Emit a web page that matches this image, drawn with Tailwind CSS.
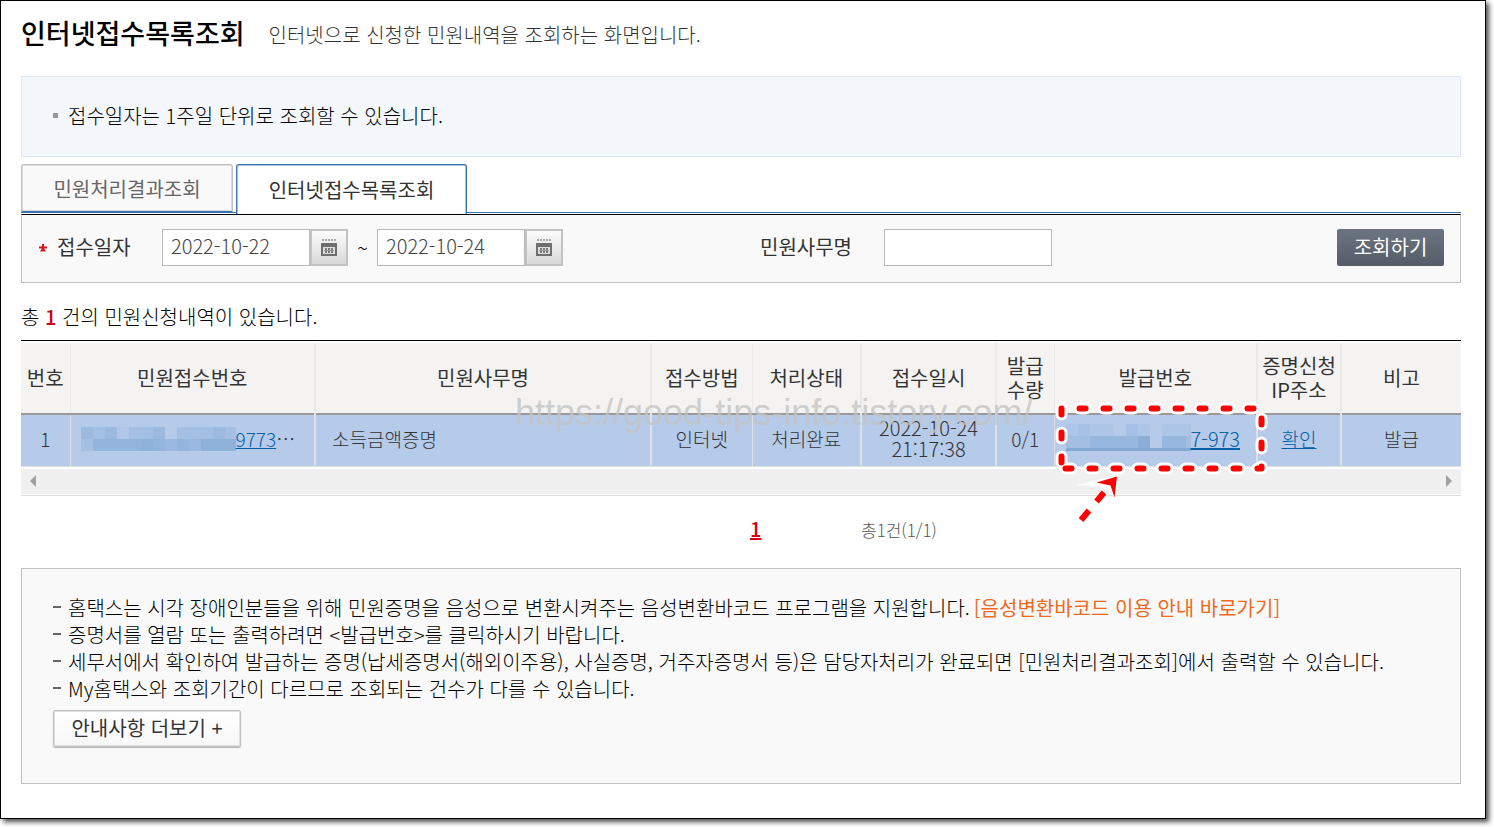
<!DOCTYPE html>
<html lang="ko">
<head>
<meta charset="utf-8">
<title>인터넷접수목록조회</title>
<script src="https://cdn.jsdelivr.net/npm/@tailwindcss/browser@4"></script>
</head>
<body class="bg-white pr-2 pb-2 font-['Noto_Sans_CJK_KR',sans-serif] font-light text-black">
<div class="relative border border-black bg-white pl-5 pr-6 pb-[34px] shadow-[3px_3px_5px_rgba(0,0,0,0.7)]">
  <header class="flex h-[75px] items-center gap-6 pb-3">
    <h1 class="text-[27px] leading-8 font-medium">인터넷접수목록조회</h1>
    <p class="pt-1 text-[20px] leading-6 text-[#333]">인터넷으로 신청한 민원내역을 조회하는 화면입니다.</p>
  </header>

  <ul class="border border-[#dfe7f0] bg-[#f4f7fc] pt-[25px] pb-[27px] pl-[31px]">
    <li class="flex items-center gap-[10px] text-[20px] leading-[27px]"><span class="size-[5px] bg-[#999]"></span>접수일자는 1주일 단위로 조회할 수 있습니다.</li>
  </ul>

  <nav class="relative mt-[7px] flex h-[50px] gap-[3px] text-[20px] font-normal">
    <span class="absolute inset-x-0 bottom-px h-px bg-[#3a72b0]"></span>
    <button type="button" class="h-[49px] w-[212px] rounded-t-[3px] border border-b-2 border-[#c0c0c0] border-b-[#3a72b0] bg-[#f9f9f9] pt-[2px] text-[#666] shadow-[inset_0_0_0_1px_#dcdcdc]">민원처리결과조회</button>
    <button type="button" class="relative w-[231px] rounded-t-[3px] border border-b-0 border-[#3a72b0] bg-white text-[#333] shadow-[inset_1px_1px_0_#a9c4e0,inset_-1px_0_0_#a9c4e0]">인터넷접수목록조회</button>
  </nav>

  <form class="flex h-[69px] items-center border border-[#c0c0c0] border-t-black bg-[#f9f9f9] px-4 pb-[2px] text-[20px]">
    <div class="flex w-[722px] items-center">
      <svg class="mr-[9px] size-[10px]" viewBox="0 0 10 10" aria-hidden="true"><path d="M5 1v7M1 4.500h8" stroke="#d4161c" stroke-width="2" fill="none"/><path d="M5 4l3 4.500H2z" fill="#d4161c"/></svg>
      <label for="from" class="w-[105px] pb-[2px] font-normal text-[#333]">접수일자</label>
      <input id="from" value="2022-10-22" class="h-[37px] w-[148px] border border-[#b9b9b9] bg-white px-2 pb-1 text-[20px] text-[#444]">
      <button type="button" aria-label="시작일 선택" class="grid h-[37px] w-[38px] place-items-center border-2 border-[#c2c2c2] bg-linear-to-b from-[#fdfdfd] to-[#d8d8d8]">
        <svg class="size-[18px]" viewBox="0 0 18 18" shape-rendering="crispEdges" aria-hidden="true"><path d="M2 1h14" stroke="#aaa" stroke-width="2" stroke-dasharray="2 1"/><path d="M1 4h16v13H1z" fill="#6e6e6e"/><path d="M3 8h12v7H3z" fill="#dedede"/><path d="M5 10h8M5 13h8" stroke="#777" stroke-width="2" stroke-dasharray="2 1"/><path d="M4 11.500h10" stroke="#999"/></svg>
      </button>
      <span class="w-[29px] text-center">~</span>
      <input aria-label="종료일" value="2022-10-24" class="h-[37px] w-[148px] border border-[#b9b9b9] bg-white px-2 pb-1 text-[20px] text-[#444]">
      <button type="button" aria-label="종료일 선택" class="grid h-[37px] w-[38px] place-items-center border-2 border-[#c2c2c2] bg-linear-to-b from-[#fdfdfd] to-[#d8d8d8]">
        <svg class="size-[18px]" viewBox="0 0 18 18" shape-rendering="crispEdges" aria-hidden="true"><path d="M2 1h14" stroke="#aaa" stroke-width="2" stroke-dasharray="2 1"/><path d="M1 4h16v13H1z" fill="#6e6e6e"/><path d="M3 8h12v7H3z" fill="#dedede"/><path d="M5 10h8M5 13h8" stroke="#777" stroke-width="2" stroke-dasharray="2 1"/><path d="M4 11.500h10" stroke="#999"/></svg>
      </button>
    </div>
    <label for="name" class="w-[124px] pb-[2px] font-normal text-[#333]">민원사무명</label>
    <input id="name" class="h-[37px] w-[168px] border border-[#b9b9b9] bg-white px-2">
    <button type="submit" class="ml-auto h-[37px] w-[107px] rounded-[2px] bg-linear-to-b from-[#6b7581] to-[#555c67] pb-[2px] font-normal text-white">조회하기</button>
  </form>

  <p class="mt-5 text-[20px] leading-7">총 <strong class="font-medium text-[#d4000f]">1</strong> 건의 민원신청내역이 있습니다.</p>

  <div class="relative mt-[9px] border-t border-black pt-[2px]">
    <table class="w-full table-fixed border-collapse text-center text-[19px] leading-6 text-[#333]">
      <colgroup><col class="w-[49px]"><col class="w-[245px]"><col><col class="w-[101px]"><col class="w-[109px]"><col class="w-[135px]"><col class="w-[58px]"><col class="w-[203px]"><col class="w-[84px]"><col class="w-[120px]"></colgroup>
      <thead class="bg-[#f5f3f1] text-[20px]">
        <tr class="h-[71px] border-b-2 border-[#999]">
          <th class="border-r border-[#e9e9e9] font-normal">번호</th><th class="border-r-2 border-[#e9e9e9] font-normal">민원접수번호</th><th class="border-r-2 border-[#e9e9e9] font-normal">민원사무명</th><th class="border-r border-[#e9e9e9] font-normal">접수방법</th><th class="border-r-2 border-[#e9e9e9] font-normal">처리상태</th><th class="border-r-2 border-[#e9e9e9] font-normal">접수일시</th><th class="border-r border-[#e9e9e9] font-normal">발급<br>수량</th><th class="border-r-2 border-[#e9e9e9] font-normal">발급번호</th><th class="border-r-2 border-[#e9e9e9] font-normal">증명신청<br>IP주소</th><th class="font-normal">비고</th>
        </tr>
      </thead>
      <tbody class="bg-[#b6cbea]">
        <tr class="h-[52px] border-b border-[#e0e0e0]">
          <td class="border-r border-[#e0e0e0] pb-[3px]">1</td>
          <td class="border-r-2 border-[#e0e0e0] pb-[3px]">
            <div class="flex items-center pl-[10px]">
              <svg class="h-6 w-[155px]" viewBox="0 0 155 24" shape-rendering="crispEdges" aria-hidden="true"><path fill="#a3bfe3" d="M0 0h84v24H0zM96 0h59v24H96z"/><path fill="#b2c6e9" d="M36 0h12v12H36z"/><path fill="#9cb9df" d="M0 0h12v12H0zM24 0h12v12H24zM72 0h12v12H72zM132 0h12v12H132z"/><path fill="#93b4db" d="M12 12h143v12H12z"/><path fill="#8fb2d9" d="M60 12h12v12H60zM120 12h35v12h-35z"/><path fill="#9ab8e0" d="M84 12h12v12H84zM108 12h12v12h-12z"/></svg>
              <a href="#" class="text-[19px] text-[#0061a8] underline">9773</a><span>…</span>
            </div>
          </td>
          <td class="border-r-2 border-[#e0e0e0] pb-[3px] pl-4 text-left">소득금액증명</td>
          <td class="border-r border-[#e0e0e0] pb-[3px]">인터넷</td>
          <td class="border-r-2 border-[#e0e0e0] pb-[3px]">처리완료</td>
          <td class="border-r-2 border-[#e0e0e0] pb-1 text-[20px] leading-[21px]">2022-10-24 21:17:38</td>
          <td class="border-r border-[#e0e0e0] pb-[3px]">0/1</td>
          <td class="border-r-2 border-[#e0e0e0] pb-[5px]">
            <div class="flex items-center pl-[11px]">
              <svg class="h-[27px] w-[125px]" viewBox="0 0 125 27" shape-rendering="crispEdges" aria-hidden="true"><path fill="#adc6e8" d="M0 0h48v12H0zM60 0h24v12H60zM96 0h29v12H96z"/><path fill="#a6c1e5" d="M12 0h12v12H12zM60 0h12v12H60z"/><path fill="#a2bfe2" d="M0 12h125v12H0z"/><path fill="#96b8df" d="M24 12h60v12H24zM96 12h24v12H96z"/><path fill="#8baed6" d="M72 12h12v12H72z"/><path fill="#b6cbea" d="M84 12h12v12H84z"/><path fill="#84aad2" d="M0 24h125v3H0z"/></svg>
              <a href="#" class="pt-[2px] text-[20px] text-[#0061a8] underline">7-973</a>
            </div>
          </td>
          <td class="border-r-2 border-[#e0e0e0] pb-[3px]"><a href="#" class="text-[#0061a8] underline">확인</a></td>
          <td class="pb-[3px]">발급</td>
        </tr>
      </tbody>
    </table>
    <div class="mt-[2px] flex h-[25px] items-center justify-between bg-[#f0f0f0] px-[9px]">
      <svg class="h-3 w-[6px]" viewBox="0 0 6 12" aria-hidden="true"><path d="M6 0v12L0 6z" fill="#a0a0a0"/></svg>
      <svg class="h-3 w-[6px]" viewBox="0 0 6 12" aria-hidden="true"><path d="M0 0v12L6 6z" fill="#a0a0a0"/></svg>
    </div>
    <div class="mt-px h-px bg-[#ddd]"></div>
    <span class="pointer-events-none absolute top-[52px] left-[494px] font-['Liberation_Sans',sans-serif] text-[36px] leading-10 font-normal whitespace-nowrap text-[#c4c4c4]/80">https://good-tips-info.tistory.com/</span>
    <svg class="pointer-events-none absolute top-[59px] right-[190px] h-[130px] w-[220px]" viewBox="1051 400 220 130" fill="none" aria-hidden="true">
      <path d="M1061.500 468.500v-60h200v60z" stroke="#fff" stroke-width="12" stroke-linecap="round" stroke-linejoin="round" stroke-dasharray="6 18" stroke-dashoffset="-6"/>
      <path d="M1061.500 468.500v-60h200v60z" stroke="#f00" stroke-width="6" stroke-linecap="round" stroke-linejoin="round" stroke-dasharray="6 18" stroke-dashoffset="-6"/>
      <path d="M1076 485l42-10-2 24-8-9-10-4z" fill="#fff"/>
      <path d="M1117 476.500l-2.500 21-4-12-14-3z" fill="#f00"/>
      <path d="M1081 520l8-9.500M1096.500 501.500l7.500-9" stroke="#f00" stroke-width="6"/>
    </svg>
  </div>

  <div class="flex h-[72px] items-center pb-[6px] pl-[729px] text-[17px] text-[#555]">
    <a href="#" class="w-[111px] text-[20px] font-medium text-[#d4000f] underline">1</a>
    <span class="pt-[2px]">총1건(1/1)</span>
  </div>

  <section class="border border-[#c0c0c0] bg-[#f9f9f9] pt-[25px] pb-9 pl-[31px] text-[20px] leading-[27px]">
    <ul>
      <li class="flex items-center"><span class="mr-[7px] h-[2px] w-2 bg-[#666]"></span>홈택스는 시각 장애인분들을 위해 민원증명을 음성으로 변환시켜주는 음성변환바코드 프로그램을 지원합니다.<a href="#" class="ml-1 font-normal text-[#ee6a1f]">[음성변환바코드 이용 안내 바로가기]</a></li>
      <li class="flex items-center"><span class="mr-[7px] h-[2px] w-2 bg-[#666]"></span>증명서를 열람 또는 출력하려면 &lt;발급번호&gt;를 클릭하시기 바랍니다.</li>
      <li class="flex items-center"><span class="mr-[7px] h-[2px] w-2 bg-[#666]"></span>세무서에서 확인하여 발급하는 증명(납세증명서(해외이주용), 사실증명, 거주자증명서 등)은 담당자처리가 완료되면 [민원처리결과조회]에서 출력할 수 있습니다.</li>
      <li class="flex items-center"><span class="mr-[7px] h-[2px] w-2 bg-[#666]"></span>My홈택스와 조회기간이 다르므로 조회되는 건수가 다를 수 있습니다.</li>
    </ul>
    <button type="button" class="mt-2 block h-[37px] w-[188px] rounded-[2px] border border-[#c0c0c0] bg-linear-to-b from-white to-[#f7f7f7] pb-[2px] text-[20px] font-normal text-[#333] shadow-[inset_0_0_0_1px_#e0e0e0,0_1px_1px_#b8b8b8]">안내사항 더보기 +</button>
  </section>
</div>
</body>
</html>
